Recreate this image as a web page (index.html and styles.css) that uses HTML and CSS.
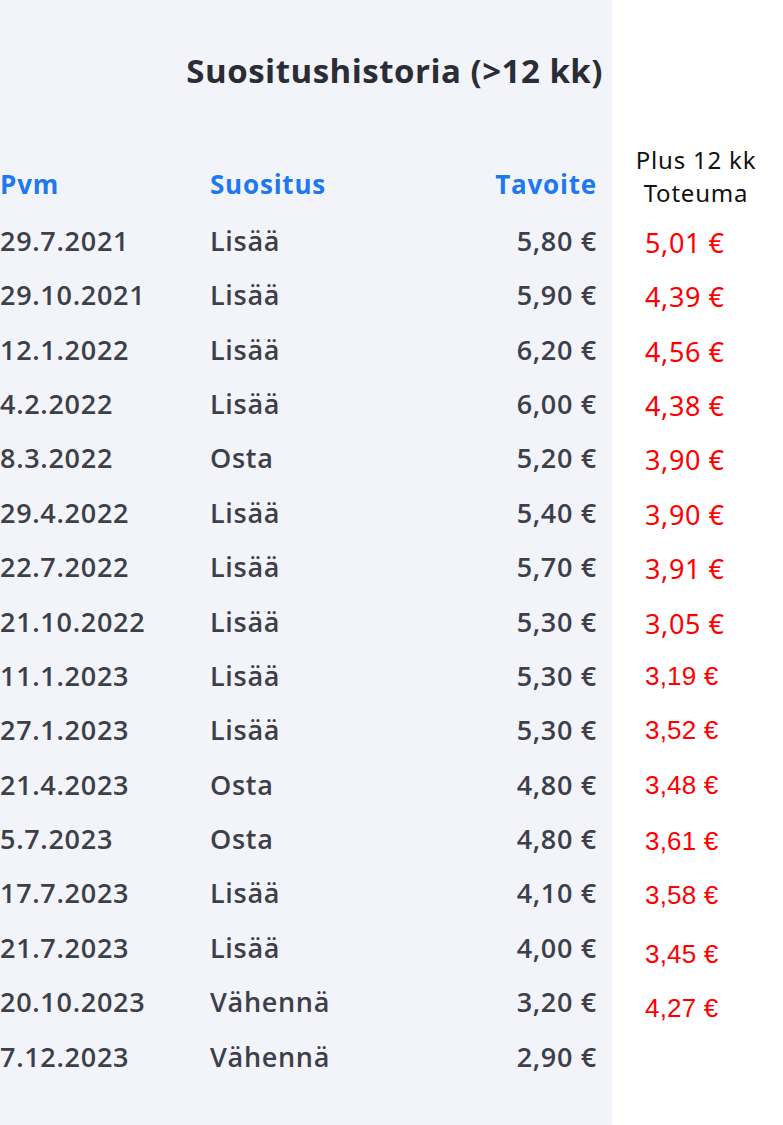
FILE: index.html
```html
<!DOCTYPE html>
<html lang="fi">
<head>
<meta charset="utf-8">
<title>Suositushistoria</title>
<link rel="stylesheet" href="styles.css">
</head>
<body>
<div class="page">
  <section class="panel">
    <h1 class="title">Suositushistoria (&gt;12 kk)</h1>
    <div class="table">
      <div class="row head">
        <span class="c-date">Pvm</span>
        <span class="c-rec">Suositus</span>
        <span class="c-target">Tavoite</span>
      </div>
      <div class="row"><span class="c-date">29.7.2021</span><span class="c-rec">Lisää</span><span class="c-target">5,80 €</span></div>
      <div class="row"><span class="c-date">29.10.2021</span><span class="c-rec">Lisää</span><span class="c-target">5,90 €</span></div>
      <div class="row"><span class="c-date">12.1.2022</span><span class="c-rec">Lisää</span><span class="c-target">6,20 €</span></div>
      <div class="row"><span class="c-date">4.2.2022</span><span class="c-rec">Lisää</span><span class="c-target">6,00 €</span></div>
      <div class="row"><span class="c-date">8.3.2022</span><span class="c-rec">Osta</span><span class="c-target">5,20 €</span></div>
      <div class="row"><span class="c-date">29.4.2022</span><span class="c-rec">Lisää</span><span class="c-target">5,40 €</span></div>
      <div class="row"><span class="c-date">22.7.2022</span><span class="c-rec">Lisää</span><span class="c-target">5,70 €</span></div>
      <div class="row"><span class="c-date">21.10.2022</span><span class="c-rec">Lisää</span><span class="c-target">5,30 €</span></div>
      <div class="row"><span class="c-date">11.1.2023</span><span class="c-rec">Lisää</span><span class="c-target">5,30 €</span></div>
      <div class="row"><span class="c-date">27.1.2023</span><span class="c-rec">Lisää</span><span class="c-target">5,30 €</span></div>
      <div class="row"><span class="c-date">21.4.2023</span><span class="c-rec">Osta</span><span class="c-target">4,80 €</span></div>
      <div class="row"><span class="c-date">5.7.2023</span><span class="c-rec">Osta</span><span class="c-target">4,80 €</span></div>
      <div class="row"><span class="c-date">17.7.2023</span><span class="c-rec">Lisää</span><span class="c-target">4,10 €</span></div>
      <div class="row"><span class="c-date">21.7.2023</span><span class="c-rec">Lisää</span><span class="c-target">4,00 €</span></div>
      <div class="row"><span class="c-date">20.10.2023</span><span class="c-rec">Vähennä</span><span class="c-target">3,20 €</span></div>
      <div class="row"><span class="c-date">7.12.2023</span><span class="c-rec">Vähennä</span><span class="c-target">2,90 €</span></div>
    </div>
  </section>
  <aside class="side">
    <div class="side-head">
      <div class="side-line">Plus 12 kk</div>
      <div class="side-line">Toteuma</div>
    </div>
    <ul class="vals">
      <li class="val big">5,01 €</li>
      <li class="val big">4,39 €</li>
      <li class="val big">4,56 €</li>
      <li class="val big">4,38 €</li>
      <li class="val big">3,90 €</li>
      <li class="val big">3,90 €</li>
      <li class="val big">3,91 €</li>
      <li class="val big">3,05 €</li>
      <li class="val small">3,19 €</li>
      <li class="val small">3,52 €</li>
      <li class="val small">3,48 €</li>
      <li class="val small lower">3,61 €</li>
      <li class="val small lower">3,58 €</li>
      <li class="val small lowest">3,45 €</li>
      <li class="val small lowest">4,27 €</li>
    </ul>
  </aside>
</div>
</body>
</html>
```

FILE: styles.css
```css
* { box-sizing: border-box; }

html, body {
  margin: 0;
  padding: 0;
  background: #ffffff;
}

.page {
  display: flex;
  width: 783px;
  height: 1125px;
  overflow: hidden;
}

.panel {
  width: 612px;
  flex: none;
  background: #f3f4f9;
  padding-top: 51px;
  font-family: "Open Sans", "Liberation Sans", sans-serif;
}

.title {
  margin: 0;
  height: 40px;
  line-height: 40px;
  text-align: right;
  padding-right: 9px;
  font-size: 33px;
  font-weight: 700;
  color: #2a2d36;
  letter-spacing: 0.5px;
}

.table {
  margin-top: 66px;
  padding-right: 15px;
}

.row {
  display: grid;
  grid-template-columns: 210px 1fr auto;
  height: 54.4px;
  line-height: 54.4px;
  font-size: 27px;
  font-weight: 600;
  color: #3d3f4a;
  letter-spacing: 0.7px;
  white-space: nowrap;
}

.row.head {
  height: 56.8px;
  line-height: 54px;
  font-size: 26px;
  font-weight: 700;
  letter-spacing: 0.8px;
  color: #1c79f2;
}

.c-target { text-align: right; }

.side {
  flex: 1;
  font-family: "Noto Sans", "Open Sans", sans-serif;
}

.side-head {
  margin-top: 143px;
  height: 66px;
  color: #111111;
  text-align: center;
  padding-right: 3px;
}

.side-line {
  height: 33px;
  line-height: 33px;
  font-size: 24px;
  letter-spacing: 0.8px;
}

.vals {
  list-style: none;
  margin: 4.8px 0 0;
  padding: 0 0 0 33px;
}

.val {
  height: 54.4px;
  line-height: 54.4px;
  color: #ff0000;
  white-space: nowrap;
}

.val.big {
  font-family: "Noto Sans", "Open Sans", sans-serif;
  font-size: 27px;
  letter-spacing: 0.6px;
  padding-top: 2px;
}

.val.small {
  font-family: "Liberation Sans", Arial, sans-serif;
  font-size: 26px;
  letter-spacing: 0.2px;
}

.val.lower { padding-top: 2px; }
.val.lowest { padding-top: 6px; }
```
